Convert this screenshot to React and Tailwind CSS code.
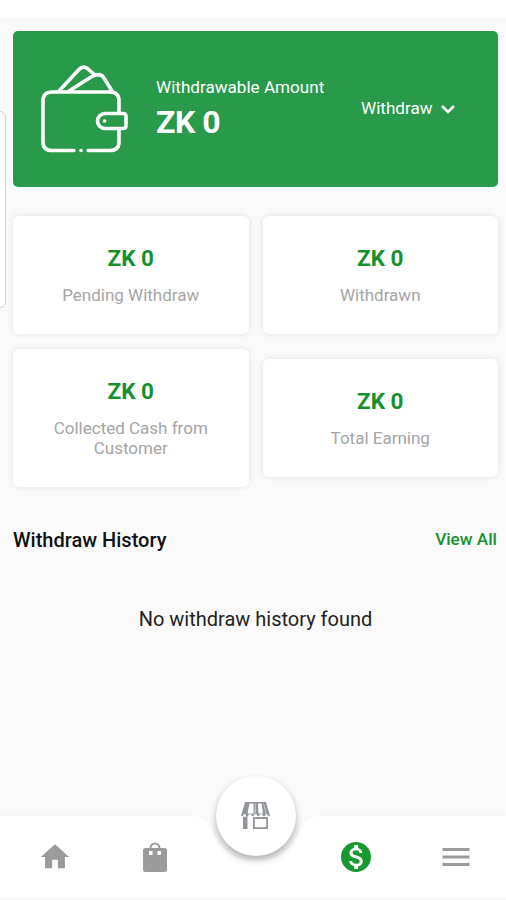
import { MdHome, MdMonetizationOn } from "react-icons/md";

const WalletIcon = () => (
  <svg
    className="block h-[88px] w-[88px]"
    viewBox="0 0 88 88"
    fill="none"
    stroke="white"
    strokeWidth="3.6"
    strokeLinecap="round"
    strokeLinejoin="round"
  >
    <path d="M78 47V36Q78 27 69 27H11Q2 27 2 36V77Q2 85.500 11 85.500H33" />
    <path d="M47 85.500H69Q78 85.500 78 77V64" />
    <path d="M40 85.500h.1" />
    <path d="M64 48.500H82Q85 48.500 85 51.500V60.500Q85 63.500 82 63.500H64A7.500 7.500 0 0 1 64 48.500Z" />
    <path d="M63.500 56h.1" />
    <path d="M18 26L37.500 5Q42 0 47 4L54 10" />
    <path d="M28 26L50 12Q59 7 63 13L71 26" />
  </svg>
);

const BagIcon = () => (
  <svg className="h-[30px] w-6" viewBox="0 0 24 30" fill="#9b9b9b">
    <path
      fillRule="evenodd"
      d="M2.500 6H6.500A5.500 5.500 0 0 1 17.500 6H21.500Q24 6 24 8.500V27.500Q24 30 21.500 30H2.500Q0 30 0 27.500V8.500Q0 6 2.500 6ZM8.500 6H15.500A3.500 3.500 0 0 0 8.500 6ZM6 9V13H9.500V9ZM14.500 9V13H18V9Z"
    />
  </svg>
);

const StoreIcon = () => (
  <svg className="block h-[27px] w-[29px]" viewBox="0 0 29 27">
    <g fill="#92969a">
      <path d="M4 0H25L29 14H0Z" />
      <path d="M2 14H6.500V27H2Z" />
      <path
        fillRule="evenodd"
        d="M12 15H27V27H12ZM13.800 17V25.200H25.200V17Z"
      />
    </g>
    <g fill="white">
      <path d="M8.500 1.500H12.500V11.500H6.500ZM17 1.500H20.500L22 11.500H17.500Z" />
      <path d="M14 1.500H14.700V11.500H13.500ZM22.300 1.500H23L25.500 11.500H24.500Z" opacity="0.6" />
      <circle cx="3.500" cy="13.500" r="1.500" />
      <circle cx="9" cy="13.700" r="1.700" />
      <circle cx="14.500" cy="13.700" r="1.700" />
      <circle cx="20" cy="13.700" r="1.700" />
      <circle cx="25.500" cy="13.500" r="1.500" />
    </g>
  </svg>
);

const StatCard = ({ amount, label }) => (
  <div className="flex flex-col items-center rounded-md bg-white px-6 pt-7 pb-[29px] text-center shadow-[0_0_6px_rgba(0,0,0,0.1)]">
    <p className="text-[22.5px] leading-[28px] font-bold text-[#17912f]">
      {amount}
    </p>
    <p className="mt-[13px] max-w-[170px] text-[17px] leading-5 text-[#a5a5a5]">
      {label}
    </p>
  </div>
);

export default function App() {
  return (
    <div className="relative flex h-[900px] w-[506px] flex-col overflow-hidden bg-[#fafafa] font-['Roboto',sans-serif]">
      <div className="h-[17px] shrink-0 bg-white" />
      {/* edge handle on the left side of the screen */}
      <div className="absolute top-[111px] -left-3 h-[197px] w-[18px] rounded-md border border-[#d0d0d0] bg-white" />

      <main className="flex-1 pr-2 pl-[13px]">
        <section className="mt-[14px] flex h-[156px] items-center rounded-[5px] bg-[#29994a] pl-7 text-white">
          <WalletIcon />
          <div className="ml-[27px] w-[205px]">
            <p className="text-[17.1px] leading-5">Withdrawable Amount</p>
            <p className="mt-[5px] text-[32px] leading-10 font-bold tracking-[-0.5px]">
              ZK 0
            </p>
          </div>
          <button className="flex items-center gap-[3px] text-[17.1px]">
            Withdraw
            <svg className="size-6" viewBox="0 0 24 24" fill="none">
              <path
                d="M6 9L12 15L18 9"
                stroke="white"
                strokeWidth="2.5"
              />
            </svg>
          </button>
        </section>

        <section className="mt-[29px] grid grid-cols-2 items-center gap-x-[14px] gap-y-[15px]">
          <StatCard amount="ZK 0" label="Pending Withdraw" />
          <StatCard amount="ZK 0" label="Withdrawn" />
          <StatCard amount="ZK 0" label="Collected Cash from Customer" />
          <StatCard amount="ZK 0" label="Total Earning" />
        </section>

        <div className="mt-10 flex items-center justify-between">
          <h2 className="text-[20px] leading-6 font-medium text-[#111]">
            Withdraw History
          </h2>
          <a className="mr-px text-[17.2px] font-medium text-[#17912f]">
            View All
          </a>
        </div>
        <p className="mt-[54px] text-center text-[20px] leading-6 text-[#222]">
          No withdraw history found
        </p>
      </main>

      <nav className="relative h-[125px] shrink-0">
        <svg
          className="absolute inset-0 h-[125px] w-[506px]"
          viewBox="0 0 506 125"
        >
          <path
            fill="#fff"
            d="M0 41H192Q206 41 212 53C220 76 235 85 256 85S292 76 300 53Q306 41 320 41H506V123H0Z"
            className="drop-shadow-[0_0_1px_rgba(0,0,0,0.05)]"
          />
        </svg>
        <div className="absolute top-px left-[216px] flex size-20 items-center justify-center rounded-full bg-white pr-px pb-px shadow-[0_4px_7px_rgba(0,0,0,0.3)]">
          <StoreIcon />
        </div>
        <div className="relative grid h-[123px] grid-cols-5 items-center justify-items-center pt-[41px] pl-[5px]">
          <MdHome className="size-[34px] text-[#9b9b9b]" />
          <BagIcon />
          <div />
          <MdMonetizationOn className="size-9 text-[#17992f]" />
          <svg className="size-9" viewBox="0 0 36 36">
            <path
              d="M4.500 10.500H31.500M4.500 18H31.500M4.500 25.500H31.500"
              stroke="#9b9b9b"
              strokeWidth="2.8"
            />
          </svg>
        </div>
      </nav>
    </div>
  );
}
